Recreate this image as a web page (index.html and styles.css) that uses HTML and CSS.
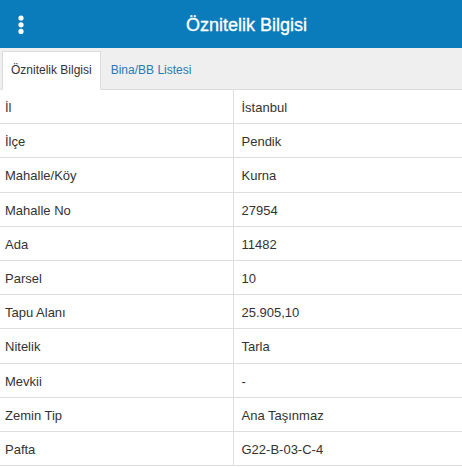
FILE: index.html
```html
<!DOCTYPE html>
<html lang="tr">
<head>
<meta charset="utf-8">
<title>Öznitelik Bilgisi</title>
<link rel="stylesheet" href="styles.css">
</head>
<body>
<header class="topbar">
  <button class="menu-btn" aria-label="Menü">
    <svg width="6" height="20" viewBox="0 0 6 20" aria-hidden="true">
      <circle cx="3" cy="3" r="2.6" fill="#fff"/>
      <circle cx="3" cy="9.8" r="2.6" fill="#fff"/>
      <circle cx="3" cy="16.4" r="2.6" fill="#fff"/>
    </svg>
  </button>
  <h1 class="title">Öznitelik Bilgisi</h1>
</header>
<nav class="tabs">
  <a class="tab active">Öznitelik Bilgisi</a>
  <a class="tab">Bina/BB Listesi</a>
</nav>
<table class="attr-table">
  <tbody>
    <tr><td class="key">İl</td><td class="val">İstanbul</td></tr>
    <tr><td class="key">İlçe</td><td class="val">Pendik</td></tr>
    <tr><td class="key">Mahalle/Köy</td><td class="val">Kurna</td></tr>
    <tr><td class="key">Mahalle No</td><td class="val">27954</td></tr>
    <tr><td class="key">Ada</td><td class="val">11482</td></tr>
    <tr><td class="key">Parsel</td><td class="val">10</td></tr>
    <tr><td class="key">Tapu Alanı</td><td class="val">25.905,10</td></tr>
    <tr><td class="key">Nitelik</td><td class="val">Tarla</td></tr>
    <tr><td class="key">Mevkii</td><td class="val">-</td></tr>
    <tr><td class="key">Zemin Tip</td><td class="val">Ana Taşınmaz</td></tr>
    <tr><td class="key">Pafta</td><td class="val">G22-B-03-C-4</td></tr>
  </tbody>
</table>
</body>
</html>
```

FILE: styles.css
```css
* { box-sizing: border-box; }

html, body {
  margin: 0;
  padding: 0;
  background: #fff;
  font-family: "Liberation Sans", Arial, sans-serif;
  color: #333;
}

.topbar {
  display: flex;
  align-items: center;
  height: 48px;
  background: #0a7bbb;
  color: #fff;
}

.menu-btn {
  display: flex;
  align-items: center;
  width: 31px;
  height: 48px;
  padding: 2px 0 0 18px;
  margin: 0;
  border: 0;
  background: transparent;
}

.title {
  flex: 1;
  margin: 0;
  padding-top: 3px;
  text-align: center;
  font-size: 18px;
  font-weight: normal;
  -webkit-text-stroke: 0.35px #fff;
}

.tabs {
  display: flex;
  align-items: flex-end;
  height: 42px;
  padding-left: 2px;
  background: #efefef;
  border-bottom: 1px solid #dcdcdc;
}

.tab {
  display: block;
  height: 39px;
  margin-bottom: -1px;
  padding: 0 9px;
  border: 1px solid transparent;
  font-size: 12px;
  line-height: 37px;
  color: #2a7ab4;
  cursor: pointer;
}

.tab.active {
  padding: 0 8px;
  background: #fff;
  border-color: #dcdcdc;
  border-bottom-color: #fff;
  color: #333;
}

.attr-table {
  width: 100%;
  border-collapse: collapse;
  font-size: 13px;
}

.attr-table td {
  padding: 9px 0 7px;
  line-height: 17.2px;
  border-bottom: 1px solid #dedede;
  vertical-align: top;
}

.attr-table .key {
  width: 233px;
  padding-left: 5px;
  border-right: 1px solid #dedede;
}

.attr-table .val {
  padding-left: 8px;
}
```
